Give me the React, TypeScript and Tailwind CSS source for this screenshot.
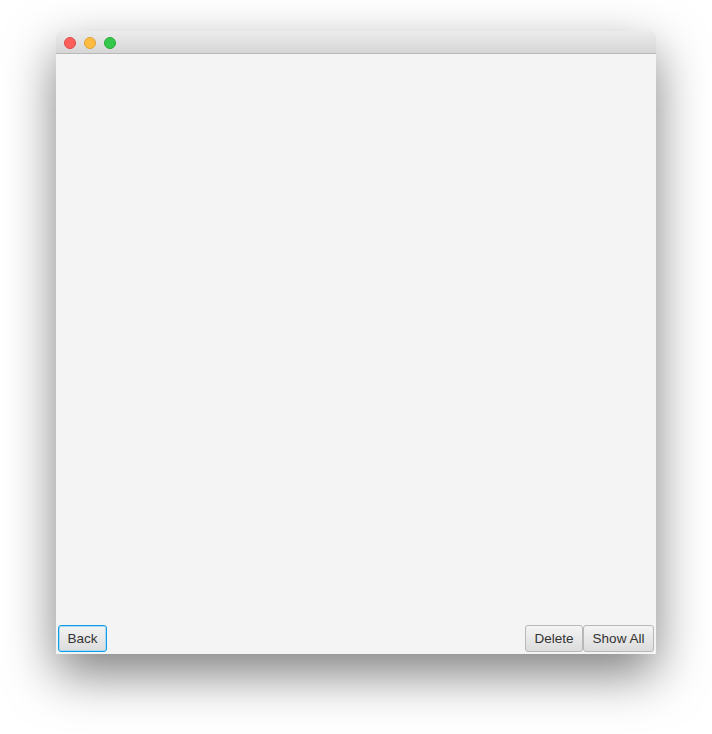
import React from "react";

function TrafficLight({ color, border }: { color: string; border: string }) {
  return (
    <span
      className="block h-[12px] w-[12px] rounded-full border"
      style={{ backgroundColor: color, borderColor: border }}
    />
  );
}

function FxButton({
  label,
  focused = false,
  width,
}: {
  label: string;
  focused?: boolean;
  width: string;
}) {
  return (
    <button
      className={`flex h-[27px] items-center justify-center rounded-[3px] bg-gradient-to-b from-[#f4f4f4] to-[#dcdcdc] pt-[2px] text-[13.5px] text-[#333] ${width} ${
        focused
          ? "border border-[#0f9de8] shadow-[inset_0_0_0_1px_#a8d8f4]"
          : "border border-[#b8b8b8]"
      }`}
    >
      {label}
    </button>
  );
}

export default function App() {
  return (
    <div
      className="h-[734px] w-[712px] bg-white pl-[56px] pt-[31px]"
      style={{ fontFamily: '"Liberation Sans", Arial, sans-serif' }}
    >
      <div className="flex w-[600px] flex-col rounded-t-[5px] shadow-[0_20px_50px_rgba(0,0,0,0.5)]">
        <div className="flex h-[23px] items-center gap-[8px] rounded-t-[5px] border-b border-[#b9b9b9] bg-gradient-to-b from-[#ececec] to-[#d6d6d6] pl-[8px] pt-[2px]">
          <TrafficLight color="#fc605c" border="#de4a44" />
          <TrafficLight color="#fdbc40" border="#dea236" />
          <TrafficLight color="#34c84a" border="#27aa35" />
        </div>
        <div className="flex h-[600px] flex-col justify-end bg-[#f4f4f4]">
          <div className="flex items-center justify-between px-[2px] pb-[2px]">
            <FxButton label="Back" focused width="w-[49px]" />
            <div className="flex">
              <FxButton label="Delete" width="w-[58px]" />
              <FxButton label="Show All" width="w-[71px]" />
            </div>
          </div>
        </div>
      </div>
    </div>
  );
}
